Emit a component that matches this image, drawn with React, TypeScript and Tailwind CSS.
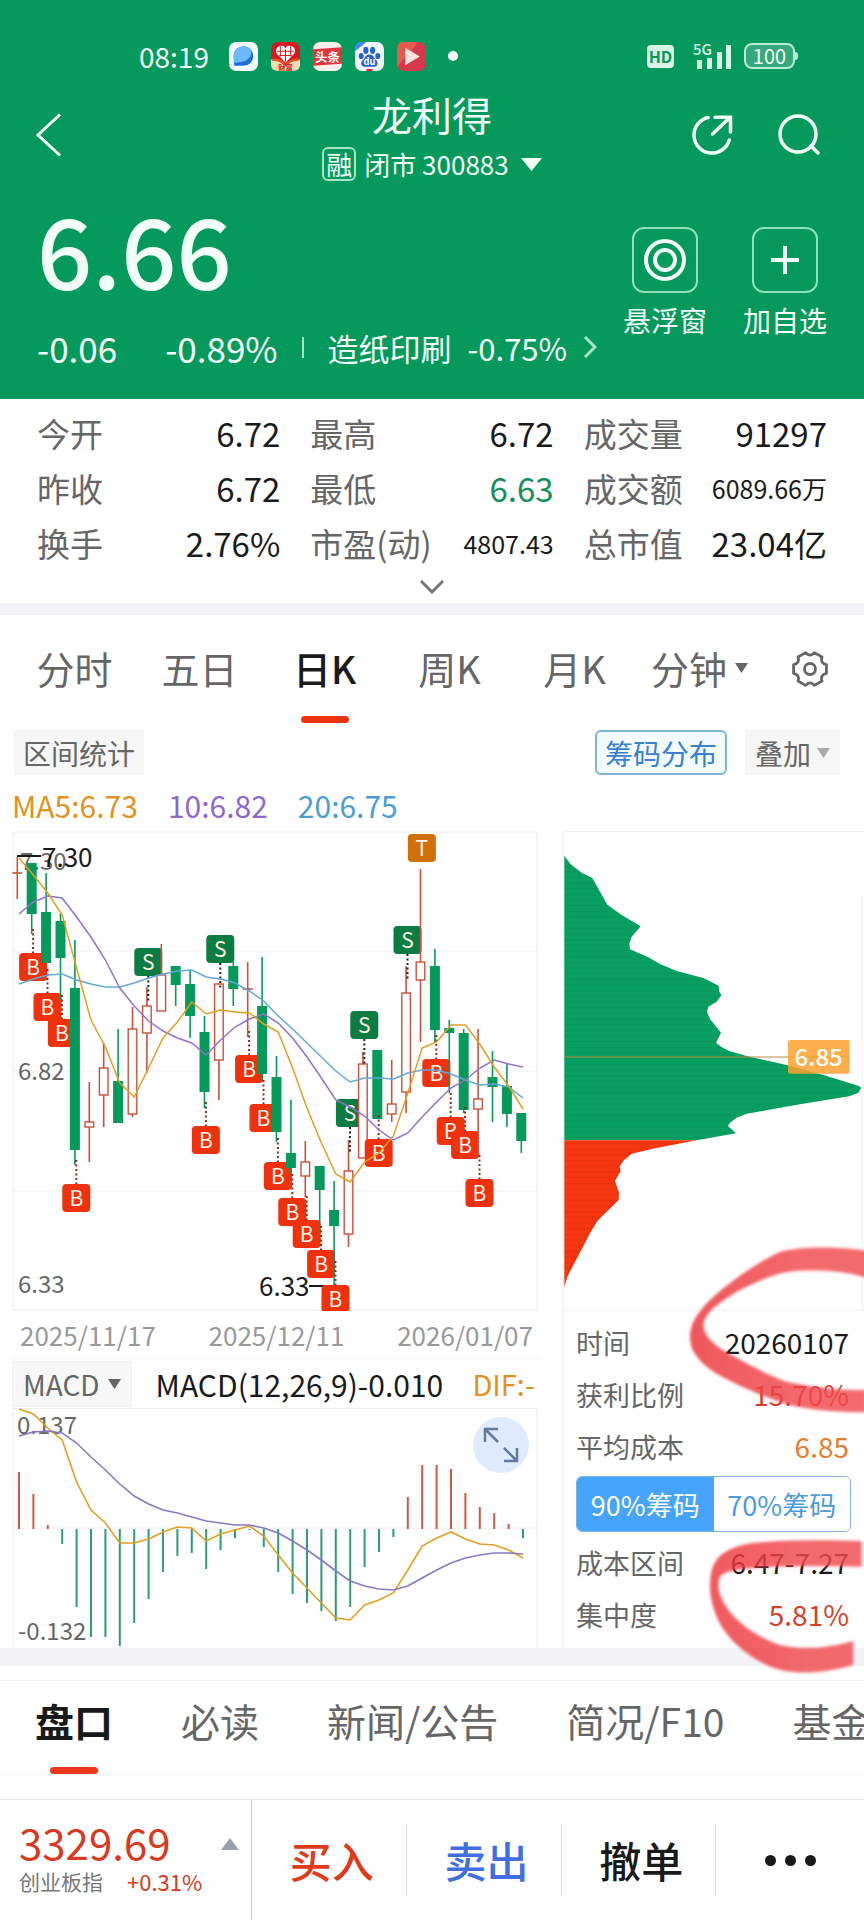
import React, { useState } from 'react';

type Candle = [high: number, top: number, bottom: number, low: number, up: 0 | 1];

const STEP = 14.4;

const candles: Candle[] = [
  [37, 53, 53, 79, 1], [43, 43, 94, 114, 0], [53, 92, 143, 143, 0], [94, 101, 138, 180, 0],
  [120, 168, 330, 345, 0], [262, 302, 307, 342, 1], [223, 248, 275, 307, 1], [209, 261, 303, 303, 0],
  [187, 209, 294, 297, 1], [167, 186, 213, 253, 1], [124, 155, 191, 191, 1], [146, 146, 165, 186, 0],
  [150, 164, 196, 218, 0], [196, 212, 272, 288, 0], [164, 164, 240, 280, 1], [140, 146, 169, 186, 0],
  [142, 169, 169, 217, 1], [137, 186, 254, 260, 0], [236, 257, 312, 322, 0], [280, 333, 348, 353, 0],
  [321, 342, 356, 377, 1], [346, 346, 370, 412, 0], [361, 390, 406, 465, 0], [320, 351, 414, 427, 1],
  [232, 244, 338, 338, 1], [230, 230, 299, 299, 0], [240, 284, 294, 302, 1], [146, 173, 272, 293, 1],
  [49, 142, 160, 222, 1], [129, 146, 210, 222, 0], [200, 208, 213, 273, 0], [209, 213, 290, 293, 0],
  [209, 279, 289, 337, 1], [231, 257, 267, 302, 0], [244, 266, 294, 307, 0], [293, 293, 321, 333, 0],
];

// candle index -> trade mark
const marks: Record<number, ['B' | 'S' | 'T', number]> = {
  1: ['B', 147], 2: ['B', 187], 3: ['B', 213], 4: ['B', 378], 9: ['S', 142], 13: ['B', 320],
  14: ['S', 129], 16: ['B', 249], 17: ['B', 298], 18: ['B', 356], 19: ['B', 392], 20: ['B', 414],
  21: ['B', 444], 22: ['B', 479], 23: ['S', 293], 24: ['S', 205], 25: ['B', 333], 27: ['S', 120],
  28: ['T', 28], 29: ['B', 253], 30: ['B', 311], 31: ['B', 325], 32: ['B', 373],
};

const ma5 = [38, 55, 73, 95, 148, 200, 227, 263, 277, 248, 218, 202, 182, 194, 190, 192, 193, 204, 212, 248, 288, 323, 354, 362, 342, 333, 316, 273, 228, 222, 205, 205, 224, 247, 266, 289];
const ma10 = [94, 82, 76, 78, 97, 117, 140, 168, 186, 201, 211, 218, 223, 235, 220, 207, 199, 194, 203, 218, 237, 258, 280, 287, 296, 310, 320, 313, 297, 282, 268, 260, 248, 240, 244, 247];
const ma20 = [164, 159, 155, 154, 160, 164, 167, 167, 163, 158, 154, 151, 150, 157, 159, 163, 171, 181, 196, 209, 223, 237, 251, 262, 258, 258, 259, 253, 250, 250, 254, 260, 265, 264, 267, 278];

const macdBars = [182, 204, 235, 254, 317, 347, 347, 356, 333, 309, 282, 266, 263, 279, 260, 248, 240, 257, 282, 304, 313, 321, 331, 317, 277, 262, 247, 207, 175, 175, 179, 203, 217, 223, 234, 248];
const dif = [119, 124, 138, 150, 192, 220, 233, 253, 253, 249, 242, 237, 238, 251, 244, 240, 236, 246, 265, 283, 298, 313, 328, 330, 315, 310, 303, 280, 256, 248, 242, 249, 254, 255, 260, 268];
const dea = [146, 142, 141, 143, 153, 167, 180, 194, 206, 214, 220, 223, 227, 231, 233, 235, 235, 238, 243, 251, 260, 270, 281, 291, 296, 299, 300, 296, 288, 280, 273, 268, 265, 263, 263, 264];

const toPoints = (ys: number[]) => ys.map((y, i) => `${19 + i * STEP},${y}`).join(' ');

const stats = [
  { label: '今开', value: '6.72' },
  { label: '最高', value: '6.72' },
  { label: '成交量', value: '91297' },
  { label: '昨收', value: '6.72' },
  { label: '最低', value: '6.63', color: 'text-[#12905c]' },
  { label: '成交额', value: '6089.66万', small: true },
  { label: '换手', value: '2.76%' },
  { label: '市盈(动)', value: '4807.43', small: true },
  { label: '总市值', value: '23.04亿' },
];

const StatusBar: React.FC = () => (
  <div className="flex h-10 items-center pl-[139px] pr-[66px] text-[28px] leading-none">
    <span>08:19</span>
    <div className="ml-5 flex gap-[13px]">
      <svg width="29" height="29" viewBox="0 0 28 28">
        <rect width="28" height="28" rx="7" fill="#f4fbff" />
        <path d="M5 23 4.500 13a9.500 9.500 0 1 1 9.500 10z" fill="#1f6fdb" />
        <path d="M4.500 14a9.500 9.500 0 0 1 17-6c1 8-5 12-17 12z" fill="#6cb8fb" />
      </svg>
      <svg width="29" height="29" viewBox="0 0 28 28">
        <rect width="28" height="28" rx="7" fill="#d71920" />
        <path d="M14 20 5.500 11a4.500 4.500 0 0 1 8.500-5 4.500 4.500 0 0 1 8.500 5z" fill="#fff" />
        <path d="M9 4v10M14 7v12M19 4v10M6 9h16M8 13h12" stroke="#d71920" strokeWidth="1" />
        <path d="M0 17q9 0 14 6 5-6 14-6v6q-1 5-7 5H7q-6 0-7-5z" fill="#f7d9b5" />
        <path d="M1 17q9 0 12 5M27 17q-9 0-12 5" stroke="#e8502a" strokeWidth="2" fill="none" />
        <text x="14" y="27" fontSize="7" fontWeight="700" textAnchor="middle" fill="#c4161c">财富</text>
      </svg>
      <svg width="29" height="29" viewBox="0 0 28 28">
        <rect width="28" height="28" rx="7" fill="#fdeeee" />
        <path d="M0 7 28 5v16L0 23z" fill="#e5353b" />
        <text x="14" y="19" fontSize="12" fontWeight="700" textAnchor="middle" fill="#fff">头条</text>
      </svg>
      <svg width="29" height="29" viewBox="0 0 28 28">
        <rect width="28" height="28" rx="7" fill="#f3f8ff" />
        <path d="M0 9V7q0-7 7-7h4z" fill="#3f86f0" />
        <g fill="#2b5fd9">
          <ellipse cx="10.500" cy="8" rx="2.500" ry="3.500" />
          <ellipse cx="17" cy="8" rx="2.500" ry="3.500" />
          <ellipse cx="6" cy="13.500" rx="2.400" ry="3" />
          <ellipse cx="22" cy="13.500" rx="2.400" ry="3" />
          <path d="M14 12c4 0 4 3 7 6 2 3 0 6-3 6H10c-4 0-5-4-3-6 3-3 3-6 7-6z" />
        </g>
        <text x="14" y="22.500" fontSize="9" fontWeight="700" textAnchor="middle" fill="#fff">du</text>
        <path d="M11 26h6v2h-6z" fill="#e23" />
      </svg>
      <svg width="29" height="29" viewBox="0 0 28 28">
        <rect width="28" height="28" rx="7" fill="#d9384c" />
        <path d="M0 7q0-7 7-7h14L0 24z" fill="#e65a50" />
        <path d="M8 5.500v17L22 14z" fill="#fde3dc" />
      </svg>
    </div>
    <span className="ml-[22px] size-[10px] rounded-full bg-white" />
    <div className="ml-auto flex items-center">
      <span className="flex h-[23px] w-[27px] items-center justify-center rounded bg-[#d8f5e8] text-base font-bold leading-none text-[#05995b]">HD</span>
      <svg className="ml-[10px] overflow-visible" width="48" height="28" viewBox="0 0 48 28" fill="#d8f5e8">
        <text x="9" y="13" fontSize="15" fontWeight="500">5G</text>
        <path d="M13 18h5v9h-5zM23 16h5v11h-5zM33 10h5v17h-5zM42 3h5v24h-5z" />
      </svg>
      <span className="ml-3 flex h-[26px] w-[51px] items-center justify-center rounded-lg border-2 border-[#b9ecd5] bg-[#37a87b] text-[20px] leading-none">100</span>
      <span className="h-2 w-[3px] rounded-r bg-[#b9ecd5]" />
    </div>
  </div>
);

const Header: React.FC = () => (
  <header className="bg-[#05995b] pt-9 text-[#f2fff9]">
    <StatusBar />

    <div className="mt-[13px] grid h-[92px] grid-cols-[1fr_auto_1fr] items-center px-[44px]">
      <button aria-label="返回" className="-ml-2 justify-self-start">
        <svg width="26" height="44" viewBox="0 0 26 44" fill="none" stroke="currentColor" strokeWidth="3">
          <path d="M24 1.500 2 22l22 20.500" />
        </svg>
      </button>
      <div className="flex flex-col items-center">
        <h1 className="text-[40px] leading-[50px]">龙利得</h1>
        <button className="mt-2 flex h-[34px] items-center text-[26px] leading-none">
          <span className="mr-2 flex size-[34px] items-center justify-center rounded-md border-2 border-[#a5e6c9] text-[26px] leading-none">融</span>
          闭市 300883
          <svg className="ml-3" width="21" height="13" viewBox="0 0 21 13" fill="currentColor">
            <path d="M0 0h21L10.500 13z" />
          </svg>
        </button>
      </div>
      <div className="flex items-center gap-[44px] justify-self-end">
        <button aria-label="分享">
          <svg width="42" height="42" viewBox="0 0 42 42" fill="none" stroke="currentColor" strokeWidth="3.500" strokeLinecap="round">
            <path d="M16 3.500A18 18 0 1 0 37.300 26" />
            <path d="M23 3.300h15.500V18M38 3.500 20.500 20" />
          </svg>
        </button>
        <button aria-label="搜索">
          <svg width="42" height="42" viewBox="0 0 42 42" fill="none" stroke="currentColor" strokeWidth="3.500" strokeLinecap="round">
            <circle cx="20" cy="20" r="18" />
            <path d="m33 32 7 7" />
          </svg>
        </button>
      </div>
    </div>

    <div className="flex justify-between px-[37px] pb-8">
      <div className="pt-[19px]">
        <div className="text-[97px] font-medium leading-[96px]">6.66</div>
        <div className="mt-[31px] flex h-10 items-center whitespace-nowrap text-[35px] leading-none">
          <span>-0.06</span>
          <span className="ml-12">-0.89%</span>
          <span className="ml-6 h-[21px] w-0.5 bg-[#a5e6c9]" />
          <a href="#industry" className="ml-6 flex items-center text-[31px]">
            造纸印刷
            <span className="ml-4">-0.75%</span>
            <svg className="ml-4" width="14" height="24" viewBox="0 0 14 24" fill="none" stroke="#a5e6c9" strokeWidth="3">
              <path d="m2 2 10 10L2 22" />
            </svg>
          </a>
        </div>
      </div>
      <div className="flex gap-9 pt-[46px] text-[28px] leading-[30px]">
        <button className="flex flex-col items-center">
          <span className="flex size-[66px] items-center justify-center rounded-xl border-2 border-[#8fdfbc]">
            <svg width="44" height="44" viewBox="0 0 44 44" fill="none" stroke="currentColor" strokeWidth="4">
              <circle cx="22" cy="22" r="19" />
              <circle cx="22" cy="22" r="10" />
            </svg>
          </span>
          <span className="mt-3">悬浮窗</span>
        </button>
        <button className="flex flex-col items-center">
          <span className="flex size-[66px] items-center justify-center rounded-xl border-2 border-[#8fdfbc]">
            <svg width="28" height="28" viewBox="0 0 28 28" stroke="currentColor" strokeWidth="4">
              <path d="M14 0v28M0 14h28" />
            </svg>
          </span>
          <span className="mt-3">加自选</span>
        </button>
      </div>
    </div>
  </header>
);

const TradeMark: React.FC<{ x: number; y: number; kind: 'B' | 'S' | 'T' }> = ({ x, y, kind }) => {
  const fill = { B: '#f0310e', S: '#0b7c42', T: '#d1700a' }[kind];
  return (
    <g>
      {kind === 'B' && <path d={`M${x} ${y - 38}V${y - 14}`} stroke="#8c2a1a" strokeWidth="2" strokeDasharray="2 2.500" />}
      {kind === 'S' && <path d={`M${x} ${y + 14}V${y + 41}`} stroke="#123" strokeWidth="2" strokeDasharray="2 2.500" />}
      <rect x={x - 14} y={y - 14} width="28" height="28" rx="4" fill={fill} />
      <text x={x} y={y + 8} fontSize="21" textAnchor="middle" fill="#fff3e6">{kind}</text>
    </g>
  );
};

const KLineChart: React.FC = () => (
  <svg className="block w-full" viewBox="12 11 527 480" fill="none">
    <path d="M13 12h524v478H13z" stroke="#ececec" />
    <path d="M13 131h524M13 251h524M13 371h524" stroke="#f1f1f1" />
    <g fontSize="24" fill="#666">
      <text x="20" y="50">7.30</text>
      <text x="18" y="260">6.82</text>
      <text x="18" y="473">6.33</text>
    </g>
    <g fontSize="26" fill="#1a1a1a">
      <text x="42" y="47">7.30</text>
      <text x="259" y="476">6.33</text>
    </g>
    <path d="M17 36h24M309 466h25" stroke="#1a1a1a" strokeWidth="2" />
    {candles.map(([high, top, bottom, low, up], i) => {
      const x = 17.3 + i * STEP;
      const color = up ? '#c9503c' : '#05995b';
      const mark = marks[i];
      return (
        <g key={i}>
          <path d={`M${x} ${high}V${top}M${x} ${bottom}V${low}`} stroke={color} strokeWidth="1.600" />
          {top === bottom && <path d={`M${x - 5} ${top}h10`} stroke={color} strokeWidth="1.600" />}
          {top !== bottom && (
            <rect
              x={x - (up ? 4.3 : 5)}
              y={top}
              width={up ? 8.6 : 10}
              height={bottom - top}
              fill={up ? '#fff' : color}
              stroke={up ? color : 'none'}
              strokeWidth="1.400"
            />
          )}
          {mark && <TradeMark x={x + 1.4} y={mark[1]} kind={mark[0]} />}
        </g>
      );
    })}
    <g strokeWidth="1.500">
      <polyline points={toPoints(ma20)} stroke="#62aad4" />
      <polyline points={toPoints(ma10)} stroke="#9272c8" />
      <polyline points={toPoints(ma5)} stroke="#dfa023" />
    </g>
  </svg>
);

const MacdChart: React.FC = () => (
  <svg className="block w-full" viewBox="12 118 527 240" fill="none">
    <path d="M13 118v240M13 118.500h524v240" stroke="#ececec" />
    <path d="M13 238h524" stroke="#eee" />
    <g fontSize="24" fill="#666">
      <text x="17" y="144">0.137</text>
      <text x="18" y="350">-0.132</text>
    </g>
    {macdBars.map((y, i) => (
      <path key={i} d={`M${19 + i * STEP} 239V${y}`} stroke={y < 239 ? '#cc5a4a' : '#2d9b7c'} strokeWidth="2" />
    ))}
    <polyline points={toPoints(dif)} stroke="#dfa023" strokeWidth="1.600" />
    <polyline points={toPoints(dea)} stroke="#8a78c4" strokeWidth="1.600" />
  </svg>
);

const ChipChart: React.FC = () => (
  <svg className="block w-full" viewBox="72 33 900 1440">
    <defs>
      <pattern id="stripes" width="8" height="17" patternUnits="userSpaceOnUse">
        <path d="M0 2h8" stroke="#000" strokeOpacity="0.070" strokeWidth="3" />
      </pattern>
    </defs>
    {[
      {
        fill: '#07a060',
        points: '73,107 92,133 125,158 157,174 202,254 245,285 302,319 275,350 268,372 270,388 325,412 360,432 410,453 490,474 536,497 538,515 544,526 530,545 505,560 501,575 510,597 543,638 528,668 545,682 570,694 620,708 740,735 850,765 955,797 964,803 955,818 928,829 780,853 620,881 590,893 570,908 564,918 588,940 470,961 73,961',
      },
      {
        fill: '#f6360f',
        points: '73,961 470,961 345,985 275,1001 250,1022 239,1040 242,1053 225,1083 237,1118 236,1140 172,1203 150,1240 125,1288 82,1370 73,1402',
      },
    ].map(area => (
      <g key={area.fill}>
        <polygon points={area.points} fill={area.fill} />
        <polygon points={area.points} fill="url(#stripes)" />
      </g>
    ))}
    <path d="M73 34H972M73 1472H972M968 230V1472" stroke="#f0f0f0" strokeWidth="3" fill="none" />
    <path d="M73 711H929" stroke="#b98d45" strokeWidth="3" />
    <rect x="744" y="660" width="185" height="101" rx="6" fill="#ffa02e" fillOpacity="0.850" />
    <text x="836" y="737" fontSize="72" textAnchor="middle" fill="#fff" fontWeight="500">6.85</text>
  </svg>
);

// Hand-drawn marker circles over the date and the concentration value
const MarkerCircles: React.FC = () => (
  <svg className="pointer-events-none absolute right-0 top-[409px] w-[300px]" viewBox="72 0 900 1320">
    <defs>
      <filter id="soft"><feGaussianBlur stdDeviation="4" /></filter>
      <linearGradient id="ink" gradientUnits="userSpaceOnUse" x1="450" y1="0" x2="800" y2="0">
        <stop offset="0" stopColor="#ec3237" />
        <stop offset="1" stopColor="#f0484e" />
      </linearGradient>
    </defs>
    <g fill="url(#ink)" fillOpacity="0.820" filter="url(#soft)">
      <path d="M980 32C900 20 780 18 720 36 640 72 550 140 500 190 470 225 452 250 450 285 449 320 460 345 500 380 540 415 690 480 760 498 830 512 900 517 980 517V450C900 450 850 447 740 425 680 405 600 360 540 325 500 295 488 275 492 245 500 215 540 185 600 150 680 110 730 93 780 92 880 90 930 98 980 114Z" />
      <path d="M965 903C850 899 700 900 620 912 560 925 525 950 515 990 505 1040 510 1080 530 1130 555 1190 610 1240 680 1275 740 1305 840 1305 940 1275V1203C860 1225 790 1230 720 1215 650 1190 590 1150 555 1095 535 1060 530 1030 542 1008 570 985 650 975 965 980Z" />
    </g>
  </svg>
);

const InfoRow: React.FC<{ label: string; value: string; color: string }> = ({ label, value, color }) => (
  <div className="flex h-[52px] items-center justify-between leading-none">
    <dt className="text-[27px] text-[#666]">{label}</dt>
    <dd className={`text-[28px] ${color}`}>{value}</dd>
  </div>
);

const ChipPanel: React.FC = () => {
  const [range, setRange] = useState('90%筹码');
  return (
    <div className="relative w-[301px] shrink-0 border-l border-[#f0f0f0]">
      <ChipChart />
      <dl className="pl-3 pr-[15px] pt-[5px]">
        <InfoRow label="时间" value="20260107" color="text-[#1a1a1a]" />
        <InfoRow label="获利比例" value="15.70%" color="text-[#d5402a]" />
        <InfoRow label="平均成本" value="6.85" color="text-[#e0822e]" />
      </dl>
      <div className="ml-3 mr-[13px] mt-1 flex h-14 overflow-hidden rounded-md border border-[#7fb2dd]">
        {['90%筹码', '70%筹码'].map(item => (
          <button
            key={item}
            onClick={() => setRange(item)}
            className={`flex-1 whitespace-nowrap text-[27px] leading-none ${range === item ? 'bg-[#47a4fc] text-white' : 'bg-white text-[#4c9bdc]'}`}
          >
            {item}
          </button>
        ))}
      </div>
      <dl className="pb-2 pl-3 pr-[15px] pt-1">
        <InfoRow label="成本区间" value="6.47-7.27" color="text-[#1a1a1a]" />
        <InfoRow label="集中度" value="5.81%" color="text-[#d5402a]" />
      </dl>
      <MarkerCircles />
    </div>
  );
};

const Triangle: React.FC<{ className?: string }> = ({ className }) => (
  <svg className={className} width="13" height="10" viewBox="0 0 13 10" fill="currentColor">
    <path d="M0 0h13L6.500 10z" />
  </svg>
);

export default function App() {
  const [period, setPeriod] = useState('日K');
  const [section, setSection] = useState('盘口');

  return (
    <div className="overflow-hidden bg-white font-['Noto_Sans_CJK_SC',sans-serif] text-[#1a1a1a]">
      <Header />

      {/* Quote stats */}
      <section className="px-[37px] pt-[7px]">
        <dl className="grid grid-cols-3 gap-x-[30px]">
          {stats.map(s => (
            <div key={s.label} className="flex h-[55px] items-center justify-between whitespace-nowrap leading-none">
              <dt className="text-[33px] text-[#666]">{s.label}</dt>
              <dd className={`${s.small ? 'text-[25px]' : 'text-[33px]'} ${s.color ?? ''}`}>{s.value}</dd>
            </div>
          ))}
        </dl>
        <button aria-label="展开" className="mx-auto flex h-8 items-center">
          <svg width="24" height="14" viewBox="0 0 24 14" fill="none" stroke="#777" strokeWidth="3">
            <path d="m1 1 11 11L23 1" />
          </svg>
        </button>
      </section>

      <div className="h-3 bg-[#f3f3f7]" />

      {/* Period tabs */}
      <nav className="flex h-[109px] items-stretch pl-3 pr-9">
        <div className="grid flex-1 grid-cols-6">
          {['分时', '五日', '日K', '周K', '月K', '分钟'].map(tab => (
            <button
              key={tab}
              onClick={() => setPeriod(tab)}
              className={`flex flex-col items-center whitespace-nowrap pt-[30px] text-[38px] leading-[46px] ${period === tab ? 'font-medium text-[#1a1a1a]' : 'text-[#666]'}`}
            >
              <span className="flex items-center">
                {tab}
                {tab === '分钟' && <Triangle className="ml-2" />}
              </span>
              {period === tab && <span className="mt-[25px] h-[7px] w-12 rounded-full bg-[#ee3311]" />}
            </button>
          ))}
        </div>
        <button aria-label="设置" className="mb-0.5 ml-[30px] text-[#666]">
          <svg width="36" height="36" viewBox="0 0 36 36" fill="none" stroke="currentColor" strokeWidth="2.800" strokeLinejoin="round">
            <path d="M34.400 13.600V22.400Q28 23.700 30 30L22.400 34.400Q18 29.500 13.600 34.400L6 30Q8 23.700 1.600 22.400V13.600Q8 12.300 6 6L13.600 1.600Q18 6.500 22.400 1.600L30 6Q28 12.300 34.400 13.600Z" />
            <circle cx="18" cy="18" r="5.500" />
          </svg>
        </button>
      </nav>

      <div className="mt-1.5 flex h-[45px] items-stretch pl-3.5 pr-6 text-[28px] leading-none text-[#666]">
        <button className="bg-[#f6f6f6] px-[9px]">区间统计</button>
        <button className="ml-auto rounded-md border-2 border-[#7fb5d2] bg-[#f2fbfd] px-2 text-[#3b7fd0]">筹码分布</button>
        <button className="ml-[18px] flex items-center bg-[#f6f6f6] px-2.5">
          叠加
          <Triangle className="ml-1.5 text-[#aaa]" />
        </button>
      </div>

      <div className="flex h-14 items-center gap-[30px] pl-3 pt-1 text-[30px] leading-none">
        <span className="text-[#df9322]">MA5:6.73</span>
        <span className="text-[#8f68cc]">10:6.82</span>
        <span className="text-[#4a9fd0]">20:6.75</span>
      </div>

      {/* Charts */}
      <section className="flex gap-6 pl-3">
        <div className="min-w-0 flex-1">
          <KLineChart />
          <div className="flex h-12 items-center justify-between border-b border-[#f4f4f4] pl-2 pr-1.5 text-[26px] leading-none text-[#999]">
            <span>2025/11/17</span>
            <span>2025/12/11</span>
            <span>2026/01/07</span>
          </div>
          <div className="flex h-[49px] items-center whitespace-nowrap text-[30px] leading-none">
            <button className="flex h-[46px] items-center border border-[#f0f0f0] bg-[#f7f7f7] px-2.5 text-[28px] text-[#666]">
              MACD
              <Triangle className="ml-2" />
            </button>
            <span className="ml-6">MACD(12,26,9)-0.010</span>
            <span className="ml-auto mr-1 text-[29px] text-[#df9322]">DIF:-</span>
          </div>
          <div className="relative">
            <MacdChart />
            <button aria-label="全屏" className="absolute right-[10px] top-[9px] flex size-14 items-center justify-center rounded-full bg-[#dfebfc]">
              <svg width="36" height="36" viewBox="0 0 36 36" fill="none" stroke="#60799c" strokeWidth="2.500">
                <path d="M2 15V2h13M2 2l13 13M34 21v13H21M34 34 21 21" />
              </svg>
            </button>
          </div>
        </div>
        <ChipPanel />
      </section>

      <div className="h-[18px] bg-[#f3f3f7]" />

      {/* Section tabs */}
      <nav className="mt-3.5 flex h-[95px] gap-[68px] overflow-hidden border-y border-[#f4f4f4] pl-[35px]">
        {['盘口', '必读', '新闻/公告', '简况/F10', '基金'].map(tab => (
          <button
            key={tab}
            onClick={() => setSection(tab)}
            className={`flex shrink-0 flex-col items-center whitespace-nowrap pt-4 text-[39px] leading-[46px] ${section === tab ? 'font-bold' : 'text-[#666]'}`}
          >
            {tab}
            {section === tab && <span className="mt-6 h-[7px] w-12 rounded-full bg-[#e8381c]" />}
          </button>
        ))}
      </nav>

      {/* Trade bar */}
      <footer className="mt-6 flex h-[121px] border-t border-[#e8e8e8]">
        <button className="flex w-[252px] shrink-0 items-start justify-between border-r border-[#ccc] pl-[19px] pr-3 pt-5 text-left text-[#d63a20]">
          <span>
            <span className="block text-[42px] leading-[44px]">3329.69</span>
            <span className="mt-0.5 flex items-center gap-6 whitespace-nowrap text-[22px] leading-[30px]">
              <span className="text-[21px] text-[#777]">创业板指</span>
              <span>+0.31%</span>
            </span>
          </span>
          <svg className="-ml-5 mt-[18px] shrink-0" width="18" height="12" viewBox="0 0 18 12" fill="#9aa0ae">
            <path d="M9 0 18 12H0z" />
          </svg>
        </button>
        <div className="flex flex-1 items-center divide-x divide-[#ddd] text-[42px] font-medium leading-none">
          <button className="h-[72px] flex-1 pl-1.5 text-[#de3a1c]">买入</button>
          <button className="h-[72px] flex-1 pl-1.5 text-[#3f6fe0]">卖出</button>
          <button className="h-[72px] flex-1 pl-1.5">撤单</button>
          <button aria-label="更多" className="flex h-[72px] flex-1 items-center justify-center gap-[9px]">
            <span className="size-[11px] rounded-full bg-[#1a1a1a]" />
            <span className="size-[11px] rounded-full bg-[#1a1a1a]" />
            <span className="size-[11px] rounded-full bg-[#1a1a1a]" />
          </button>
        </div>
      </footer>
    </div>
  );
}
